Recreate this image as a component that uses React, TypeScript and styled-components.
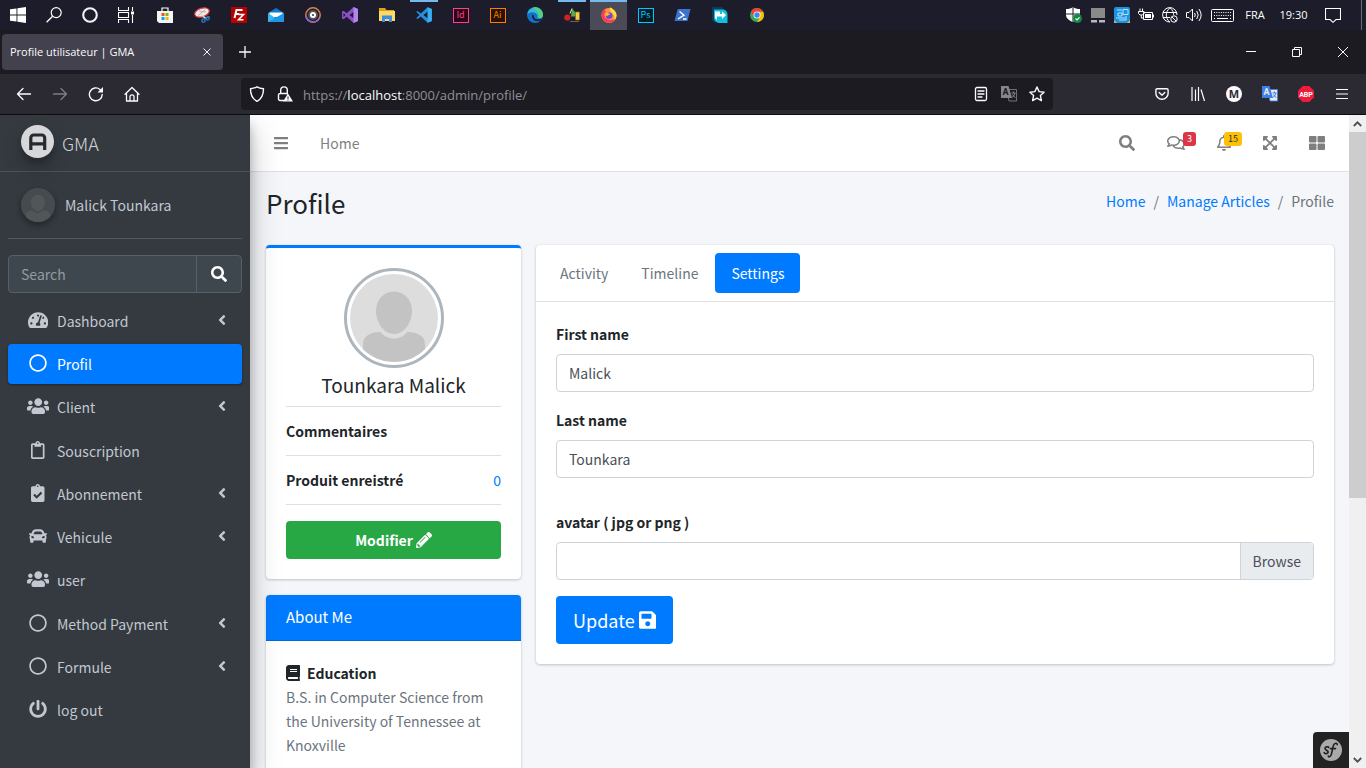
import React from "react";
import styled, { createGlobalStyle, css } from "styled-components";
import {
  FaAngleLeft,
  FaBars,
  FaBook,
  FaCar,
  FaClipboardCheck,
  FaExpandArrowsAlt,
  FaPencilAlt,
  FaPowerOff,
  FaRegBell,
  FaRegCircle,
  FaRegClipboard,
  FaRegComments,
  FaSave,
  FaSearch,
  FaTachometerAlt,
  FaThLarge,
  FaUsers,
} from "react-icons/fa";

const pageFont = '"Source Sans Pro", "Noto Sans CJK SC", sans-serif';
const systemFont = '"Segoe UI", "Open Sans", "Noto Sans", sans-serif';

const GlobalStyle = createGlobalStyle`
  *, *::before, *::after { box-sizing: border-box; }
  body { margin: 0; overflow: hidden; background: #1c1b22; }
  button, input { font: inherit; color: inherit; margin: 0; }
  button { border: 0; padding: 0; background: none; cursor: pointer; }
  a { text-decoration: none; color: #007bff; }
  ul, ol, p, h1, h2, h3 { margin: 0; padding: 0; font-weight: 400; }
  ul, ol { list-style: none; }
  svg { display: block; flex: none; }
`;

/* Icons that are not square keep the proportions of their own view box. */
const AngleIcon = styled(FaAngleLeft)`aspect-ratio: 1 / 2;`;
const BarsIcon = styled(FaBars)`aspect-ratio: 7 / 8;`;
const BookIcon = styled(FaBook)`aspect-ratio: 7 / 8;`;
const CheckIcon = styled(FaClipboardCheck)`aspect-ratio: 3 / 4;`;
const ExpandIcon = styled(FaExpandArrowsAlt)`aspect-ratio: 7 / 8;`;
const BellIcon = styled(FaRegBell)`aspect-ratio: 7 / 8;`;
const ClipboardIcon = styled(FaRegClipboard)`aspect-ratio: 3 / 4;`;
const CommentsIcon = styled(FaRegComments)`aspect-ratio: 9 / 8;`;
const SaveIcon = styled(FaSave)`aspect-ratio: 7 / 8;`;
const GaugeIcon = styled(FaTachometerAlt)`aspect-ratio: 9 / 8;`;
const UsersIcon = styled(FaUsers)`aspect-ratio: 5 / 4;`;

const Screen = styled.div`
  display: flex;
  flex-direction: column;
  height: 100vh;
  overflow: hidden;
  font-family: ${pageFont};
  font-size: 14px;
  line-height: 24px;
  color: #212529;
`;

/* ---------- Desktop task bar ---------- */

const TaskBar = styled.header`
  display: flex;
  flex: none;
  height: 30px;
  background: #1c1c2a;
  color: #fff;
  font-family: ${systemFont};
  font-size: 11px;
  line-height: 16px;
`;

const TaskGroup = styled.div`
  display: flex;
  margin-right: 2px;
`;

const TaskButton = styled.button<{ $wide?: boolean; $running?: boolean; $focused?: boolean }>`
  display: flex;
  align-items: center;
  justify-content: center;
  width: ${(p) => (p.$wide ? 37 : 36)}px;
  height: 30px;
  background: ${(p) => (p.$focused ? "#4b4b57" : "none")};
  ${(p) =>
    (p.$running || p.$focused) &&
    css`
      &::before {
        content: "";
        position: absolute;
        top: 0;
        width: ${p.$focused ? 37 : 28}px;
        height: 2px;
        background: #76b9ed;
      }
    `}
`;

const Tray = styled.div`
  display: flex;
  margin-left: auto;
`;

const TrayItem = styled.div<{ $width?: number }>`
  display: flex;
  align-items: center;
  justify-content: center;
  width: ${(p) => p.$width ?? 24}px;
`;

const ShowDesktop = styled.button`
  width: 5px;
  margin-left: 10px;
  border-left: 1px solid #6a6a75;
`;

const AppTile = styled.span<{ $fg: string; $bg: string }>`
  display: flex;
  align-items: center;
  justify-content: center;
  width: 16px;
  height: 15px;
  border: 1px solid ${(p) => p.$fg};
  background: ${(p) => p.$bg};
  color: ${(p) => p.$fg};
  font: 9px/12px "Noto Sans CJK SC", sans-serif;
`;

/* ---------- Browser window ---------- */

const TabStrip = styled.div`
  display: flex;
  flex: none;
  align-items: center;
  height: 44px;
  padding-left: 2px;
  background: #1c1b22;
  color: #fbfbfe;
  font-family: ${systemFont};
  font-size: 11px;
  line-height: 16px;
`;

const BrowserTab = styled.div`
  display: flex;
  align-items: center;
  justify-content: space-between;
  width: 221px;
  height: 36px;
  padding: 0 8px;
  border-radius: 4px;
  background: #42414d;
`;

const TabClose = styled.button`
  display: grid;
  place-items: center;
  width: 16px;
  height: 16px;
`;

const NewTab = styled.button`
  display: grid;
  place-items: center;
  width: 44px;
  height: 36px;
`;

const WindowControls = styled.div`
  display: flex;
  margin-left: auto;
`;

const WindowButton = styled.button`
  display: grid;
  place-items: center;
  width: 46px;
  height: 44px;
`;

const ToolBar = styled.div`
  display: flex;
  flex: none;
  align-items: center;
  height: 41px;
  padding: 0 6px;
  border-bottom: 1px solid #0c0c0d;
  background: #2b2a33;
  color: #fbfbfe;
  font-family: ${systemFont};
`;

const ToolButton = styled.button<{ $dim?: boolean }>`
  display: grid;
  place-items: center;
  width: 36px;
  height: 36px;
  opacity: ${(p) => (p.$dim ? 0.4 : 1)};
`;

const UrlBar = styled.div`
  display: flex;
  flex: 1;
  align-items: center;
  height: 32px;
  margin: 0 91px;
  padding: 0 2px;
  border-radius: 4px;
  background: #1c1b22;
`;

const UrlButton = styled.button`
  display: grid;
  place-items: center;
  width: 28px;
  height: 28px;
`;

const Url = styled.p`
  flex: 1;
  padding: 2px 0 0 4px;
  color: #8f8f97;
  font-size: 13px;
  line-height: 20px;
  b {
    font-weight: 400;
    color: #fbfbfe;
  }
`;

const Round = styled.span`
  display: grid;
  place-items: center;
  width: 16px;
  height: 16px;
  border-radius: 8px;
  background: #fbfbfe;
  color: #2b2a33;
  font-size: 11px;
  font-weight: 700;
  line-height: 16px;
`;

const Viewport = styled.div`
  display: flex;
  flex: 1;
  min-height: 0;
  overflow: hidden;
`;

const ScrollBar = styled.div`
  display: flex;
  flex-direction: column;
  width: 17px;
  background: #f0f0f0;
`;

const ScrollArrow = styled.button<{ $last?: boolean }>`
  display: grid;
  place-items: center;
  height: 17px;
  margin-top: ${(p) => (p.$last ? "auto" : 0)};
`;

const ScrollThumb = styled.div`
  height: 56%;
  background: #cdcdcd;
`;

/* ---------- Side bar ---------- */

const SideBar = styled.aside`
  z-index: 2;
  flex: none;
  width: 250px;
  background: #343a40;
  color: #c2c7d0;
  box-shadow: 0 14px 28px rgba(0, 0, 0, 0.25), 0 10px 10px rgba(0, 0, 0, 0.22);
`;

const Brand = styled.a`
  display: flex;
  align-items: center;
  gap: 8px;
  height: 57px;
  padding: 0 21px;
  border-bottom: 1px solid #4b545c;
  color: rgba(255, 255, 255, 0.8);
  font-size: 18px;
  font-weight: 300;
`;

const BrandLogo = styled.span`
  display: block;
  margin-bottom: 4px;
  border-radius: 50%;
  opacity: 0.8;
  box-shadow: 0 10px 20px rgba(0, 0, 0, 0.19), 0 6px 6px rgba(0, 0, 0, 0.23);
`;

const UserPanel = styled.a`
  display: flex;
  align-items: center;
  gap: 10px;
  height: 67px;
  margin: 0 8px 16px;
  padding: 0 13px;
  border-bottom: 1px solid #4f5962;
  color: #c2c7d0;
`;

const SmallAvatar = styled.span`
  border-radius: 50%;
  box-shadow: 0 3px 6px rgba(0, 0, 0, 0.16), 0 3px 6px rgba(0, 0, 0, 0.23);
`;

const SearchForm = styled.form`
  display: flex;
  height: 38px;
  margin: 0 8px;
  border: 1px solid #56606a;
  border-radius: 4px;
  background: #3f474e;
  color: #fff;
`;

const SearchInput = styled.input`
  flex: 1;
  min-width: 0;
  padding: 0 12px;
  border: 0;
  background: none;
  &::placeholder {
    color: #939ba2;
    opacity: 1;
  }
`;

const SearchButton = styled.button`
  display: grid;
  place-items: center;
  width: 45px;
  border-left: 1px solid #56606a;
`;

const Menu = styled.ul`
  display: flex;
  flex-direction: column;
  justify-content: space-between;
  min-height: 429px;
  margin: 8px 8px 0;
`;

const MenuLink = styled.a<{ $active?: boolean }>`
  display: flex;
  align-items: center;
  height: 40px;
  padding: 0 16px;
  border-radius: 4px;
  color: ${(p) => (p.$active ? "#fff" : "#c2c7d0")};
  ${(p) =>
    p.$active &&
    css`
      background: #007bff;
      box-shadow: 0 1px 3px rgba(0, 0, 0, 0.12), 0 1px 2px rgba(0, 0, 0, 0.24);
    `}
`;

const MenuIcon = styled.span`
  display: flex;
  justify-content: center;
  width: 28px;
  margin-right: 5px;
  padding-bottom: 2px;
  svg {
    width: auto;
    height: 18px;
  }
`;

const MenuArrow = styled.span`
  margin-left: auto;
  padding-bottom: 2px;
  svg {
    width: auto;
    height: 16px;
  }
`;

/* ---------- Main column ---------- */

const Main = styled.main`
  position: relative;
  flex: 1;
  min-width: 0;
  overflow: hidden;
  background: #f4f6f9;
`;

const NavBar = styled.nav`
  display: flex;
  align-items: center;
  height: 57px;
  padding: 0 8px;
  border-bottom: 1px solid #dee2e6;
  background: #fff;
`;

const NavLink = styled.a<{ $push?: boolean }>`
  position: relative;
  display: flex;
  align-items: center;
  height: 40px;
  margin-left: ${(p) => (p.$push ? "auto" : 0)};
  padding: 0 16px;
  color: #7f7f7f;
  svg {
    width: auto;
    height: 16px;
  }
`;

const Badge = styled.span<{ $warning?: boolean }>`
  position: absolute;
  top: 9px;
  right: 5px;
  padding: 0 4px;
  border-radius: 3px;
  background: ${(p) => (p.$warning ? "#ffc107" : "#dc3545")};
  color: ${(p) => (p.$warning ? "#1f2d3d" : "#fff")};
  font-size: 9px;
  line-height: 14px;
`;

const ContentHeader = styled.div`
  display: flex;
  justify-content: space-between;
  height: 73px;
  padding: 15px 15px 0 16px;
`;

const Title = styled.h1`
  font-size: 26px;
  line-height: 32px;
`;

const Crumbs = styled.ol`
  display: flex;
  padding-top: 2px;
  li + li::before {
    content: "/";
    padding: 0 8px;
    color: #6c757d;
  }
  li:last-child {
    color: #6c757d;
  }
`;

const Columns = styled.div`
  display: grid;
  grid-template-columns: calc(25% - 12px) 1fr;
  align-items: start;
  gap: 15px;
  padding: 0 15px 0 16px;
`;

const Card = styled.section<{ $outlined?: boolean }>`
  margin-bottom: 16px;
  border-top: ${(p) => (p.$outlined ? "3px solid #007bff" : "0")};
  border-radius: 4px;
  background: #fff;
  box-shadow: 0 0 1px rgba(0, 0, 0, 0.13), 0 1px 3px rgba(0, 0, 0, 0.2);
  overflow: hidden;
`;

const CardBody = styled.div`
  padding: 20px;
`;

const Portrait = styled.div`
  width: 100px;
  height: 100px;
  margin: 0 auto 4px;
  padding: 3px;
  border: 3px solid #adb5bd;
  border-radius: 50%;
`;

const PersonName = styled.h3`
  margin-bottom: 8px;
  font-size: 19px;
  line-height: 26px;
  text-align: center;
`;

const Facts = styled.ul`
  margin-bottom: 16px;
  border-bottom: 1px solid #dfdfdf;
`;

const Fact = styled.li`
  display: flex;
  justify-content: space-between;
  padding: 12px 0;
  border-top: 1px solid #dfdfdf;
`;

const Button = styled.button<{ $success?: boolean; $large?: boolean }>`
  display: flex;
  align-items: center;
  justify-content: center;
  gap: ${(p) => (p.$large ? 4 : 3)}px;
  width: ${(p) => (p.$success ? "100%" : "auto")};
  height: ${(p) => (p.$large ? 48 : 38)}px;
  padding: 0 17px;
  border-radius: 4px;
  background: ${(p) => (p.$success ? "#28a745" : "#007bff")};
  color: #fff;
  font-size: ${(p) => (p.$large ? 18 : 14)}px;
  font-weight: ${(p) => (p.$success ? 700 : 400)};
  svg {
    width: auto;
    height: ${(p) => (p.$large ? 20 : 16)}px;
  }
`;

const AboutHeader = styled.h3`
  padding: 10px 20px 11px;
  border-bottom: 1px solid #0069d9;
  background: #007bff;
  color: #fff;
  font-size: 15px;
  line-height: 24px;
`;

const Topic = styled.strong`
  display: flex;
  align-items: center;
  gap: 7px;
  svg {
    width: auto;
    height: 16px;
  }
`;

const Muted = styled.p`
  color: #6c757d;
`;

const Tabs = styled.div`
  display: flex;
  gap: 1px;
  padding: 8px;
  border-bottom: 1px solid #dfdfdf;
`;

const TabButton = styled.button<{ $active?: boolean }>`
  height: 40px;
  padding: 0 16px;
  border-radius: 4px;
  background: ${(p) => (p.$active ? "#007bff" : "none")};
  color: ${(p) => (p.$active ? "#fff" : "#6c757d")};
`;

const Field = styled.div<{ $spaced?: boolean }>`
  margin-bottom: 16px;
  padding-top: ${(p) => (p.$spaced ? 16 : 0)}px;
`;

const Label = styled.label`
  display: block;
  margin-bottom: 8px;
  font-weight: 700;
`;

const TextInput = styled.input`
  display: block;
  width: 100%;
  height: 38px;
  padding: 0 12px;
  border: 1px solid #ced4da;
  border-radius: 4px;
  background: #fff;
  color: #495057;
`;

const FileBox = styled.label`
  display: flex;
  justify-content: flex-end;
  height: 38px;
  border: 1px solid #ced4da;
  border-radius: 4px;
  color: #495057;
  overflow: hidden;
  cursor: pointer;
`;

const FileInput = styled.input`
  flex: 1;
  min-width: 0;
  opacity: 0;
`;

const FileBrowse = styled.span`
  padding: 6px 12px;
  border-left: 1px solid #ced4da;
  background: #e9ecef;
`;

const DebugToggle = styled.button`
  position: absolute;
  right: 0;
  bottom: 0;
  display: grid;
  place-items: center;
  width: 36px;
  height: 36px;
  border-top-left-radius: 4px;
  background: #222;
`;

/* ---------- Drawings ---------- */

type DrawingProps = { w?: number; h?: number; box?: string; children: React.ReactNode };

const Drawing = ({ w = 16, h = 16, box = "0 0 16 16", children }: DrawingProps) => (
  <svg width={w} height={h} viewBox={box} fill="none" stroke="none" aria-hidden="true">
    {children}
  </svg>
);

const Line = ({ d, width = 1.3 }: { d: string; width?: number }) => (
  <path d={d} stroke="currentColor" strokeWidth={width} strokeLinecap="round" strokeLinejoin="round" />
);

const Silhouette = ({ size, back = "#ddd", front = "#c3c3c3" }: { size: number; back?: string; front?: string }) => (
  <svg width={size} height={size} viewBox="0 0 88 88" aria-hidden="true">
    <defs>
      <clipPath id={`disc${size}`}>
        <circle cx="44" cy="44" r="44" />
      </clipPath>
    </defs>
    <g clipPath={`url(#disc${size})`}>
      <rect width="88" height="88" fill={back} />
      <path d="M44 17.500c10.500 0 18 8.500 18 19.500 0 11-7.500 23-18 23s-18-12-18-23c0-11 7.500-19.500 18-19.500z" fill={front} />
      <path d="M30.500 58c3 4 8 6.500 13.500 6.500S54.500 62 57 58c9 0 18 3 18 12v18H13V70c0-9 9-12 17.500-12z" fill={front} />
    </g>
  </svg>
);

const icons = {
  windows: (
    <Drawing>
      <path d="M0 2.300 6.500 1.400V7.500H0zM7.400 1.300 16 0v7.500H7.400zM0 8.400h6.500v6.200L0 13.700zM7.400 8.400H16V16l-8.600-1.300z" fill="#fff" />
    </Drawing>
  ),
  search: (
    <Drawing>
      <circle cx="10.200" cy="5.600" r="5" stroke="#fff" strokeWidth="1.200" />
      <path d="M6.600 9.200.6 15.300" stroke="#fff" strokeWidth="1.300" />
    </Drawing>
  ),
  cortana: (
    <Drawing>
      <circle cx="8" cy="8" r="6.800" stroke="#f2f2f2" strokeWidth="2.100" />
    </Drawing>
  ),
  taskView: (
    <Drawing>
      <path d="M.5 0v3.500h10V0M.5 16v-3.500h10V16M.5 5.500h10v5H.5zM14.500 0v4M14.500 8v8" stroke="#fff" strokeWidth="1.100" />
      <path d="M13 4.500h3v3h-3z" fill="#fff" />
    </Drawing>
  ),
  store: (
    <Drawing>
      <path d="M5 4V1h6v3" stroke="#fff" strokeWidth="1.200" />
      <path d="M0 4h16v12H2L0 14z" fill="#f4f4f4" />
      <path d="M4.500 6h3v3h-3z" fill="#f25022" />
      <path d="M8.500 6h3v3h-3z" fill="#7fba00" />
      <path d="M4.500 10h3v3h-3z" fill="#00a4ef" />
      <path d="M8.500 10h3v3h-3z" fill="#ffb900" />
    </Drawing>
  ),
  snip: (
    <Drawing>
      <ellipse cx="8" cy="5.500" rx="7.500" ry="4.300" transform="rotate(-18 8 5.500)" fill="#f5e9e9" stroke="#d63a3a" strokeWidth="1.200" />
      <path d="M4 8.500 11 3M5 4l7 1" stroke="#b8b0b0" />
      <path d="m7 7.500 4 3.500 4.500-1" stroke="#ddd" strokeWidth="1.200" />
      <circle cx="9.500" cy="13.500" r="1.700" stroke="#2382c8" strokeWidth="1.300" />
      <circle cx="13.700" cy="11.500" r="1.500" stroke="#2382c8" strokeWidth="1.300" />
    </Drawing>
  ),
  fileZilla: (
    <Drawing>
      <path d="M0 0h16v16H0z" fill="#b80000" />
      <path d="m3.500 11 2-8h6M4.300 7h4" stroke="#fff" strokeWidth="2" />
      <path d="M7.500 7.500h5l-5 5.300h5" stroke="#fff" strokeWidth="1.600" />
    </Drawing>
  ),
  mail: (
    <Drawing>
      <path d="M0 6 8 1l8 5v9H0z" fill="#1278c8" />
      <path d="M1.500 5.500h13V10h-13z" fill="#fff" />
      <path d="m0 6 8 5.500L16 6v9H0z" fill="#35b7f1" />
      <path d="M0 15 16 6v9z" fill="#1c97e4" />
    </Drawing>
  ),
  groove: (
    <Drawing>
      <circle cx="8" cy="8" r="7.200" stroke="#d98252" strokeWidth="1.500" />
      <path d="M1 9a7.200 7.200 0 0 0 13.500 2" stroke="#8d64c9" strokeWidth="1.600" />
      <circle cx="8" cy="8" r="5" fill="#5b4f58" />
      <circle cx="8" cy="8" r="3" fill="#fff" />
      <circle cx="8" cy="8" r="1" fill="#333" />
    </Drawing>
  ),
  visualStudio: (
    <Drawing>
      <path d="M11.500 0 16 2v12l-4.500 2L4.700 9.800 1.600 12.200 0 11.400V4.600l1.600-.8 3.100 2.400zM11.700 4.800 7.500 8l4.200 3.200zM1.500 6v4l2-2z" fill="#8a4fc7" fillRule="evenodd" />
      <path d="M11.500 0 16 2v12l-4.500 2z" fill="#b685ec" />
    </Drawing>
  ),
  explorer: (
    <Drawing>
      <path d="M0 1h6l1.500 2H15v3H0z" fill="#e3a012" />
      <path d="M0 4h16v10H0z" fill="#ffd968" />
      <path d="M3 15V8.500h10V15h-3v-3H6v3z" fill="#3b8fe0" />
    </Drawing>
  ),
  code: (
    <Drawing>
      <path d="M11.600.3 15.800 2v12l-4.200 1.700L4.800 9.600l-3.200 2.500L.2 11.300 3.500 8 .2 4.700l1.400-.8 3.200 2.500zM11.800 4.500 7.400 8l4.400 3.500z" fill="#2290dc" fillRule="evenodd" />
      <path d="M11.600.3 15.800 2v12l-4.200 1.700z" fill="#38aef5" />
    </Drawing>
  ),
  edge: (
    <Drawing>
      <circle cx="8" cy="8" r="8" fill="#1272c9" />
      <path d="M.2 7A8 8 0 0 1 16 7.500c0 3-2.500 4-4.500 3.700C9.500 10.500 11 9.500 10.500 8 9 5 4 4 .2 7z" fill="#35b9d8" />
      <path d="M6 .4A8 8 0 0 1 16 8c0 2.500-2.500 3.600-4.500 3.200 0-2 1-4-1-6.700-1.300-1.700-3-2.700-4.500-4.100z" fill="#57cf79" />
      <path d="M6 8c-1 4 3 6.500 8 4.500" stroke="#1c1c2a" strokeWidth="1.500" />
    </Drawing>
  ),
  shapes: (
    <Drawing>
      <path d="M8 1.500 12 6v3.500H7z" fill="#56a84a" />
      <path d="m8 1.500-2 5" stroke="#f2e9a0" />
      <circle cx="3.300" cy="10.500" r="3.100" fill="#d51f26" />
      <path d="M11.500 5h4v8h-4z" fill="#f4cd48" stroke="#8a6520" strokeWidth=".7" />
      <path d="M6 14.500h9" stroke="#756047" />
    </Drawing>
  ),
  firefox: (
    <Drawing>
      <circle cx="8" cy="8.500" r="7.500" fill="#ff9640" />
      <path d="M.7 7A7.500 7.500 0 0 0 15 11.200C12 14 5 13.500 3.500 9 3 7 4 5.500 5 5c-1-1-1-2.500-1-3.500C2 3 .7 5 .7 7z" fill="#fb3a5c" />
      <path d="M9 .2c2 1 6.500 4 6.500 8.300 0 2-1 3.500-2 4.500.5-4-1-6-3-7.500C9 4 8.500 2 9 .2z" fill="#ffde43" />
      <circle cx="8.200" cy="8.700" r="3.200" fill="#7146d8" />
      <path d="M4 6.500c2-1.500 4 0 5.500 1-1.200 0-2.500.5-3 1.500C5 8.800 4.200 8 4 6.500z" fill="#ffb42f" />
    </Drawing>
  ),
  powerShell: (
    <Drawing w={17}>
      <path d="M3.200 2H16l-3 12H0z" fill="#3c73cf" />
      <path d="m5 4.500 4.500 3.700L3.500 12M8.500 12H12" stroke="#fff" strokeWidth="1.400" />
    </Drawing>
  ),
  transfer: (
    <Drawing>
      <path d="M0 0h10l6 6H3v10L0 13z" fill="#0a3d58" />
      <path d="M2 2.500h8a5 5 0 0 1 5.500 5V16H7a5 5 0 0 1-5-5z" fill="#13bfdd" />
      <path d="M3 4.500h5v2.500h2V4.500L14 8l-4 4V9.500H5V13L3 11z" fill="#fff" />
    </Drawing>
  ),
  chrome: (
    <Drawing w={14} h={14}>
      <circle cx="8" cy="8" r="8" fill="#35a853" />
      <path d="M1.100 4A8 8 0 0 1 15 4.200H8L4.600 10z" fill="#ea4335" />
      <path d="M15 4.200A8 8 0 0 1 8 16l3.500-6L10 4.200z" fill="#fbbc05" />
      <circle cx="8" cy="8" r="4" fill="#fff" />
      <circle cx="8" cy="8" r="3.100" fill="#4285f4" />
    </Drawing>
  ),
  shield: (
    <Drawing>
      <path d="M7 0c2 1.500 4 2 7 2v6c0 3-3 5.500-7 7C3 13.500 0 11 0 8V2c3 0 5-.5 7-2z" fill="#fff" />
      <path d="M7 0v15M0 7h14" stroke="#1c1c2a" />
      <circle cx="11.500" cy="11.500" r="4.500" fill="#10893e" />
      <path d="m9.500 11.500 1.500 1.500 2.500-2.700" stroke="#fff" strokeWidth="1.200" />
    </Drawing>
  ),
  device: (
    <Drawing>
      <path d="M1 1h14v10H1z" fill="#8a8a8a" />
      <path d="M1 13h6v2.500H1zM9 13h6v2.500H9z" fill="#b9b9b9" />
    </Drawing>
  ),
  network: (
    <Drawing>
      <rect width="16" height="16" rx="2" fill="#1b93df" />
      <path d="M3 3h5M9 2.500h5v5H9zM4 6h4v3H4zM2 11h9M5 13h7M12 9v4" stroke="#b8e3ff" />
      <path d="M0 13v3h3zM16 13v3h-3z" fill="#dfae62" />
    </Drawing>
  ),
  battery: (
    <Drawing>
      <path d="M2 1.500v3M4.500 1.500v3M.5 4.500H6v2L4.500 8H2L.5 6.500zM3.300 8v3H5M5.500 5.500h9v7h-9zM15.500 7.500v3" stroke="#fff" />
      <path d="M7 7h6v4H7z" fill="#fff" />
    </Drawing>
  ),
  globe: (
    <Drawing>
      <path d="M8 15A7.200 7.200 0 1 1 15 8M8 .8c-5 4-5 10.500 0 14.400M8 .8c3 2.500 3.700 5 3.600 7M1 5.500h14M1 10.500h7" stroke="#fff" />
      <circle cx="12" cy="12" r="3.200" stroke="#fff" />
      <path d="m10 10 4 4" stroke="#fff" />
    </Drawing>
  ),
  volume: (
    <Drawing>
      <path d="M.5 5.500H3L6.500 2v12L3 10.500H.5zM8.500 6q1.500 2 0 4M10.700 4q3 4 0 8M12.900 2q4.500 6 0 12" stroke="#fff" />
    </Drawing>
  ),
  keyboard: (
    <Drawing w={23} h={13} box="0 0 23 13">
      <rect x=".5" y=".5" width="22" height="12" rx="1" stroke="#fff" />
      <path d="M3 3.500h17M3 6.500h17" stroke="#fff" strokeDasharray="1 1.300" />
      <path d="M3 9.500h1M6 9.500h11M19 9.500h1" stroke="#fff" />
    </Drawing>
  ),
  notifications: (
    <Drawing>
      <path d="M.5 1.500h15v11H11L8 15.300 5 12.500H.5z" stroke="#fff" strokeWidth="1.100" />
    </Drawing>
  ),
  tabClose: (
    <Drawing w={8} h={8} box="0 0 10 10">
      <Line d="m1 1 8 8M9 1 1 9" width={1.2} />
    </Drawing>
  ),
  close: (
    <Drawing w={10} h={10} box="0 0 10 10">
      <path d="m0 0 10 10M10 0 0 10" stroke="currentColor" />
    </Drawing>
  ),
  plus: (
    <Drawing w={12} h={12} box="0 0 12 12">
      <Line d="M6 .5v11M.5 6h11" />
    </Drawing>
  ),
  minimize: (
    <Drawing w={10} h={10} box="0 0 10 10">
      <path d="M0 4.500h10" stroke="currentColor" />
    </Drawing>
  ),
  restore: (
    <Drawing w={10} h={10} box="0 0 10 10">
      <path d="M.5 2.500h7v7h-7zM2.500 2.500v-2h7v7h-2" stroke="currentColor" />
    </Drawing>
  ),
  back: (
    <Drawing>
      <Line d="M14.500 8H1.500M7 2.500 1.500 8 7 13.500" />
    </Drawing>
  ),
  forward: (
    <Drawing>
      <Line d="M1.500 8h13M9 2.500 14.500 8 9 13.500" />
    </Drawing>
  ),
  reload: (
    <Drawing>
      <Line d="M14.200 8.500A6.400 6.400 0 1 1 12 3.500" width={1.4} />
      <path d="M15 1v5.500H9.500z" fill="currentColor" />
    </Drawing>
  ),
  home: (
    <Drawing>
      <Line d="M1 8.200 8 1.500l7 6.700M2.500 7v8h11V7M6 15v-4.200a2 2 0 0 1 4 0V15" />
    </Drawing>
  ),
  tracking: (
    <Drawing>
      <Line d="M8 .8c2 1.200 4 1.700 6.500 2 0 6-1.500 10-6.500 12.500C3 12.800 1.500 8.800 1.500 2.800 4 2.500 6 2 8 .8z" width={1.4} />
    </Drawing>
  ),
  lockWarning: (
    <Drawing>
      <Line d="M7 14.500H3A1.500 1.500 0 0 1 1.500 13V9A1.500 1.500 0 0 1 3 7.500h7M3.700 7.500V4.200a3.300 3.300 0 0 1 6.600 0V8" width={1.4} />
      <path d="m11 7.500 5 8H6z" fill="currentColor" />
      <path d="M11 10.500v2.300M11 13.500v1" stroke="#1c1b22" />
    </Drawing>
  ),
  reader: (
    <Drawing w={14} h={16} box="1 0 14 16">
      <Line d="M4 1.500h8A1.500 1.500 0 0 1 13.500 3v10a1.500 1.500 0 0 1-1.500 1.500H4A1.500 1.500 0 0 1 2.500 13V3A1.500 1.500 0 0 1 4 1.500zM5 5h6M5 8h6M5 11h4" />
    </Drawing>
  ),
  star: (
    <Drawing>
      <Line d="m8 1 2.100 4.600 5 .6-3.700 3.400 1 5L8 12.100l-4.400 2.500 1-5L.9 6.200l5-.6z" width={1.4} />
    </Drawing>
  ),
  pocket: (
    <Drawing w={14} h={14}>
      <Line d="M2.500 2h11A1.500 1.500 0 0 1 15 3.500V7A7 7 0 0 1 1 7V3.500A1.500 1.500 0 0 1 2.500 2zM4.800 6.300 8 9.300l3.200-3" width={1.6} />
    </Drawing>
  ),
  library: (
    <Drawing>
      <path d="M2 1v14M5.500 3.500V15M8.500 1v14M11 3.500 14.500 15" stroke="currentColor" strokeWidth="1.200" />
    </Drawing>
  ),
  hamburger: (
    <Drawing w={12} h={12} box="0 0 12 12">
      <path d="M0 1.500h12M0 6h12M0 10.500h12" stroke="currentColor" strokeWidth="1.200" />
    </Drawing>
  ),
  abp: (
    <Drawing>
      <path d="M4.700 0h6.600L16 4.700v6.600L11.300 16H4.700L0 11.300V4.700z" fill="#ee1c3c" />
      <text x="8" y="10.700" fill="#fff" fontFamily="Roboto, sans-serif" fontSize="7" fontWeight="700" textAnchor="middle">
        ABP
      </text>
    </Drawing>
  ),
};

const Translate = ({ color, page }: { color: string; page: string }) => (
  <Drawing>
    <path d="M6 3.500h9.500V15H8z" fill={page} stroke={color} strokeWidth=".8" />
    <path d="M0 0h7.500L11 12H0z" fill={color} />
    <text x="4.500" y="9" fill={page} fontFamily="Roboto, sans-serif" fontSize="9" fontWeight="700" textAnchor="middle">
      A
    </text>
    <path d="M10.500 7h4M12.500 5.500V7M14 7q-.5 3-3 4.500M11.500 8.500q1 2 3 3" stroke={color} />
  </Drawing>
);

const Chevron = ({ down }: { down?: boolean }) => (
  <Drawing w={9} h={6} box="0 0 9 6">
    <path d={down ? "m.8 1 3.700 3.700L8.200 1" : "M.8 5l3.700-3.700L8.200 5"} stroke="#505050" strokeWidth="1.800" />
  </Drawing>
);

/* ---------- Data ---------- */

const pinnedTools = [
  ["Start", icons.windows],
  ["Search", icons.search],
  ["Cortana", icons.cortana],
  ["Task View", icons.taskView],
] as const;

type App = { name: string; icon: React.ReactNode; running?: boolean; focused?: boolean };

const apps: App[] = [
  { name: "Store", icon: icons.store },
  { name: "Snipping Tool", icon: icons.snip },
  { name: "FileZilla", icon: icons.fileZilla },
  { name: "Mail", icon: icons.mail },
  { name: "Groove", icon: icons.groove },
  { name: "Visual Studio", icon: icons.visualStudio },
  { name: "Explorer", icon: icons.explorer },
  { name: "VS Code", icon: icons.code, running: true },
  { name: "InDesign", icon: <AppTile $fg="#ff3f93" $bg="#2e0516">Id</AppTile> },
  { name: "Illustrator", icon: <AppTile $fg="#ff7c00" $bg="#261300">Ai</AppTile> },
  { name: "Edge", icon: icons.edge },
  { name: "Laragon", icon: icons.shapes, running: true },
  { name: "Firefox", icon: icons.firefox, focused: true },
  { name: "Photoshop", icon: <AppTile $fg="#00c8ff" $bg="#001d26">Ps</AppTile> },
  { name: "PowerShell", icon: icons.powerShell },
  { name: "Transfer", icon: icons.transfer },
  { name: "Chrome", icon: icons.chrome },
];

const trayIcons = [icons.shield, icons.device, icons.network, icons.battery, icons.globe, icons.volume];

const menu = [
  { label: "Dashboard", Icon: GaugeIcon, open: true },
  { label: "Profil", Icon: FaRegCircle, active: true },
  { label: "Client", Icon: UsersIcon, open: true },
  { label: "Souscription", Icon: ClipboardIcon },
  { label: "Abonnement", Icon: CheckIcon, open: true },
  { label: "Vehicule", Icon: FaCar, open: true },
  { label: "user", Icon: UsersIcon },
  { label: "Method Payment", Icon: FaRegCircle, open: true },
  { label: "Formule", Icon: FaRegCircle, open: true },
  { label: "log out", Icon: FaPowerOff },
];

/* ---------- Page ---------- */

const DesktopBar = () => (
  <TaskBar>
    <TaskGroup>
      {pinnedTools.map(([name, icon]) => (
        <TaskButton key={name} aria-label={name}>{icon}</TaskButton>
      ))}
    </TaskGroup>
    <TaskGroup>
      {apps.map((app) => (
        <TaskButton key={app.name} aria-label={app.name} $wide $running={app.running} $focused={app.focused}>
          {app.icon}
        </TaskButton>
      ))}
    </TaskGroup>
    <Tray>
      {trayIcons.map((icon, i) => (
        <TrayItem key={i}>{icon}</TrayItem>
      ))}
      <TrayItem $width={32}>{icons.keyboard}</TrayItem>
      <TrayItem $width={34}>FRA</TrayItem>
      <TrayItem $width={43}>19:30</TrayItem>
      <TrayItem $width={36}>{icons.notifications}</TrayItem>
      <ShowDesktop aria-label="Show desktop" />
    </Tray>
  </TaskBar>
);

const BrowserChrome = () => (
  <>
    <TabStrip>
      <BrowserTab>
        <span>Profile utilisateur | GMA</span>
        <TabClose aria-label="Close tab">{icons.tabClose}</TabClose>
      </BrowserTab>
      <NewTab aria-label="New tab">{icons.plus}</NewTab>
      <WindowControls>
        <WindowButton aria-label="Minimize">{icons.minimize}</WindowButton>
        <WindowButton aria-label="Restore">{icons.restore}</WindowButton>
        <WindowButton aria-label="Close">{icons.close}</WindowButton>
      </WindowControls>
    </TabStrip>
    <ToolBar>
      <ToolButton aria-label="Back">{icons.back}</ToolButton>
      <ToolButton aria-label="Forward" $dim>{icons.forward}</ToolButton>
      <ToolButton aria-label="Reload">{icons.reload}</ToolButton>
      <ToolButton aria-label="Home page">{icons.home}</ToolButton>
      <UrlBar>
        <UrlButton aria-label="Tracking protection">{icons.tracking}</UrlButton>
        <UrlButton aria-label="Connection">{icons.lockWarning}</UrlButton>
        <Url>
          https://<b>localhost</b>:8000/admin/profile/
        </Url>
        <UrlButton aria-label="Reader view">{icons.reader}</UrlButton>
        <UrlButton aria-label="Translate page"><Translate color="#85858b" page="#1c1b22" /></UrlButton>
        <UrlButton aria-label="Bookmark">{icons.star}</UrlButton>
      </UrlBar>
      <ToolButton aria-label="Pocket">{icons.pocket}</ToolButton>
      <ToolButton aria-label="Library">{icons.library}</ToolButton>
      <ToolButton aria-label="Account"><Round>M</Round></ToolButton>
      <ToolButton aria-label="Translate"><Translate color="#3f7fe8" page="#e8eaee" /></ToolButton>
      <ToolButton aria-label="Adblock">{icons.abp}</ToolButton>
      <ToolButton aria-label="Menu">{icons.hamburger}</ToolButton>
    </ToolBar>
  </>
);

const SideNavigation = () => (
  <SideBar>
    <Brand href="#">
      <BrandLogo>
        <Drawing w={33} h={33} box="0 0 33 33">
          <circle cx="16.500" cy="16.500" r="16.500" fill="#fff" />
          <path d="M9.800 25V13a3 3 0 0 1 3-3h7.900a3 3 0 0 1 3 3v12M10 18.800h13.500" stroke="#23272b" strokeWidth="3.200" />
        </Drawing>
      </BrandLogo>
      GMA
    </Brand>
    <UserPanel href="#">
      <SmallAvatar><Silhouette size={34} back="#464b50" front="#515659" /></SmallAvatar>
      Malick Tounkara
    </UserPanel>
    <SearchForm onSubmit={(e) => e.preventDefault()}>
      <SearchInput type="search" placeholder="Search" aria-label="Search" />
      <SearchButton aria-label="Search"><FaSearch size={16} /></SearchButton>
    </SearchForm>
    <Menu>
      {menu.map(({ label, Icon, open, active }) => (
        <li key={label}>
          <MenuLink href="#" $active={active}>
            <MenuIcon><Icon /></MenuIcon>
            {label}
            {open && <MenuArrow><AngleIcon /></MenuArrow>}
          </MenuLink>
        </li>
      ))}
    </Menu>
  </SideBar>
);

export default function App() {
  return (
    <Screen>
      <GlobalStyle />
      <DesktopBar />
      <BrowserChrome />
      <Viewport>
        <SideNavigation />
        <Main>
          <NavBar>
            <NavLink href="#" aria-label="Toggle menu"><BarsIcon /></NavLink>
            <NavLink href="#">Home</NavLink>
            <NavLink href="#" aria-label="Search" $push><FaSearch /></NavLink>
            <NavLink href="#" aria-label="Messages"><CommentsIcon /><Badge>3</Badge></NavLink>
            <NavLink href="#" aria-label="Notifications"><BellIcon /><Badge $warning>15</Badge></NavLink>
            <NavLink href="#" aria-label="Full screen"><ExpandIcon /></NavLink>
            <NavLink href="#" aria-label="Panels"><FaThLarge /></NavLink>
          </NavBar>
          <ContentHeader>
            <Title>Profile</Title>
            <Crumbs>
              <li><a href="#">Home</a></li>
              <li><a href="#">Manage Articles</a></li>
              <li>Profile</li>
            </Crumbs>
          </ContentHeader>
          <Columns>
            <div>
              <Card $outlined>
                <CardBody>
                  <Portrait><Silhouette size={88} /></Portrait>
                  <PersonName>Tounkara Malick</PersonName>
                  <Facts>
                    <Fact><b>Commentaires</b></Fact>
                    <Fact><b>Produit enreistré</b><a href="#">0</a></Fact>
                  </Facts>
                  <Button $success>Modifier <FaPencilAlt /></Button>
                </CardBody>
              </Card>
              <Card>
                <AboutHeader>About Me</AboutHeader>
                <CardBody>
                  <Topic><BookIcon /> Education</Topic>
                  <Muted>B.S. in Computer Science from the University of Tennessee at Knoxville</Muted>
                </CardBody>
              </Card>
            </div>
            <Card>
              <Tabs role="tablist">
                <TabButton role="tab">Activity</TabButton>
                <TabButton role="tab">Timeline</TabButton>
                <TabButton role="tab" aria-selected $active>Settings</TabButton>
              </Tabs>
              <CardBody as="form" onSubmit={(e: React.FormEvent) => e.preventDefault()}>
                <Field>
                  <Label htmlFor="first">First name</Label>
                  <TextInput id="first" defaultValue="Malick" />
                </Field>
                <Field>
                  <Label htmlFor="last">Last name</Label>
                  <TextInput id="last" defaultValue="Tounkara" />
                </Field>
                <Field $spaced>
                  <Label htmlFor="avatar">avatar ( jpg or png )</Label>
                  <FileBox>
                    <FileInput type="file" id="avatar" accept=".jpg,.png" />
                    <FileBrowse>Browse</FileBrowse>
                  </FileBox>
                </Field>
                <Button $large>Update <SaveIcon /></Button>
              </CardBody>
            </Card>
          </Columns>
          <DebugToggle aria-label="Symfony toolbar">
            <Drawing w={22} h={22} box="0 0 22 22">
              <circle cx="11" cy="11" r="11" fill="#aaa" />
              <path d="M8.700 8.500c-.2-1.200-3.800-.9-3.700 1 .1 1.700 3.400 1.800 3.200 3.700-.2 1.700-3.700 2-4 .4M17.200 5.700c.3-1.800-2.700-2.200-3.700.6-1.200 3.600-1.300 6.500-2.300 9.500-.7 2.200-2.600 2.600-2.900 1.200M10.500 9.600h5" stroke="#222" strokeWidth="1.600" strokeLinecap="round" />
            </Drawing>
          </DebugToggle>
        </Main>
        <ScrollBar>
          <ScrollArrow aria-label="Scroll up"><Chevron /></ScrollArrow>
          <ScrollThumb />
          <ScrollArrow aria-label="Scroll down" $last><Chevron down /></ScrollArrow>
        </ScrollBar>
      </Viewport>
    </Screen>
  );
}
